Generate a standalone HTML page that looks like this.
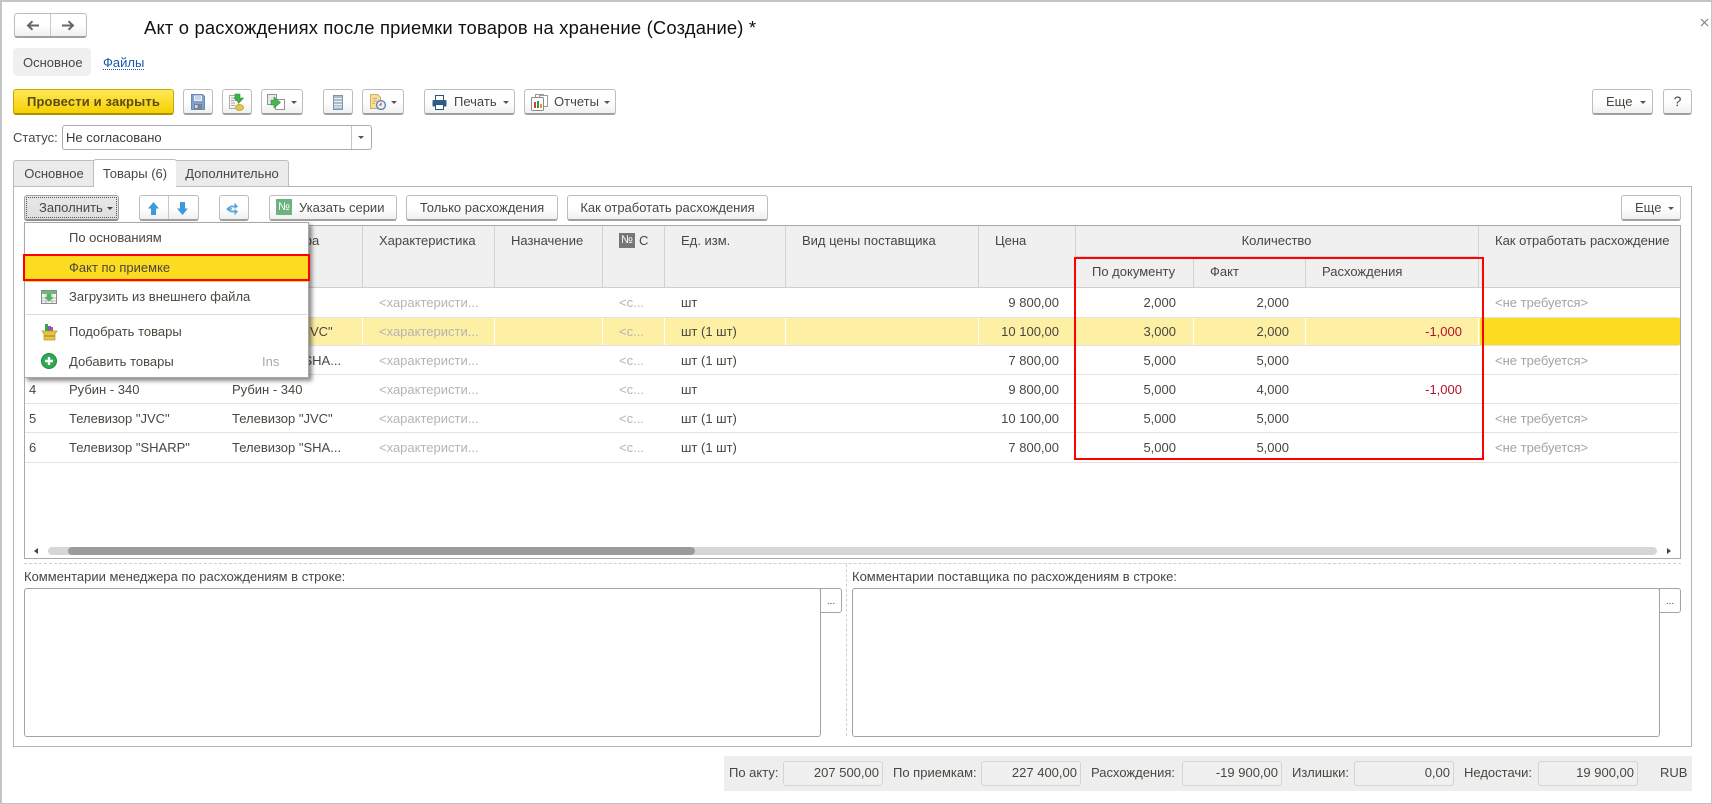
<!DOCTYPE html>
<html lang="ru"><head><meta charset="utf-8"><title>Акт о расхождениях</title>
<style>
html,body{margin:0;padding:0;background:#fff}
#p{position:relative;width:1712px;height:804px;overflow:hidden;background:#fff;font-family:"Liberation Sans",Arial,sans-serif;font-size:13px;color:#4a463f}
#p div,#p svg{position:absolute;box-sizing:border-box}
.t{white-space:nowrap;line-height:16px;height:16px}
.r{white-space:nowrap;line-height:16px;height:16px;text-align:right}
.g{color:#b4b4b4}
.g2{color:#a3a3a3}
.red{color:#b5122e}
.b{border:1px solid #bdbdbd;border-bottom:2px solid #a0a0a0;border-radius:3px;background:linear-gradient(#fff 0%,#fff 50%,#f0f0f0 100%);height:26px;line-height:23px;white-space:nowrap;text-align:center}
.tri{width:0;height:0;border-left:3px solid transparent;border-right:3px solid transparent;border-top:3.500px solid #555}
.rowl{left:25px;width:1654px;height:1px;background:#e2e2e2}
.f{background:#f0f0f0;border:1px solid #d4d4d4;border-radius:3px;height:25px;top:761px;line-height:22px;text-align:right;padding-right:3px;color:#4a463f}
.w{background:#fff;width:1px;top:318px;height:27px}
.hs{background:#d2d2d2;width:1px}
</style></head><body><div id="p">
<!-- window border -->
<div style="left:0;top:0;width:1712px;height:804px;border:2px solid #c4c4c4;border-right-width:1px;border-bottom-width:1px"></div>

<!-- nav -->
<div class="b" style="left:14px;top:13px;width:73px;height:25px"></div>
<div style="left:50px;top:14px;width:1px;height:22px;background:#c9c9c9"></div>
<svg style="left:26px;top:20px" width="14" height="11" viewBox="0 0 14 11"><path d="M13 5.500H3M6.500 1.200L2 5.500L6.500 9.800" fill="none" stroke="#666" stroke-width="2"/></svg>
<svg style="left:61px;top:20px" width="14" height="11" viewBox="0 0 14 11"><path d="M1 5.500H11M7.500 1.200L12 5.500L7.500 9.800" fill="none" stroke="#666" stroke-width="2"/></svg>
<div class="t" style="left:144px;top:17px;height:22px;line-height:22px;font-size:18.400px;color:#111;letter-spacing:.18px">Акт о расхождениях после приемки товаров на хранение (Создание) *</div>
<svg style="left:1700px;top:18px" width="9" height="9" viewBox="0 0 9 9"><path d="M1 1L8 8M8 1L1 8" stroke="#777" stroke-width="1"/></svg>

<!-- form tabs -->
<div style="left:13px;top:48px;width:78px;height:28px;background:#f0f0f0;border-radius:4px"></div>
<div class="t" style="left:23px;top:55px">Основное</div>
<div class="t" style="left:103px;top:55px;color:#1d56a8;border-bottom:1px dotted #1d56a8;height:15px">Файлы</div>

<!-- command bar -->
<div class="b" style="left:13px;top:89px;width:161px;background:linear-gradient(#ffe95a,#f6d000);border:1px solid #c6a900;border-bottom:2px solid #ad9200;color:#5b4c10;font-weight:bold;letter-spacing:.15px">Провести и закрыть</div>
<div class="b" style="left:183px;top:89px;width:30px"></div>
<svg style="left:191px;top:94px" width="14" height="16" viewBox="0 0 14 16"><path d="M.5 .5H11.500L13.500 2.500V15.500H.5Z" fill="#7ea2d0" stroke="#6688b5"/><rect x="3" y="1.500" width="8" height="5.500" fill="#eef3f9"/><path d="M4 3H10M4 5H10" stroke="#9db6d6"/><rect x="3" y="10" width="8" height="5" fill="#77808c"/><rect x="4" y="11" width="2.500" height="3" fill="#d6dadf"/></svg>
<div class="b" style="left:222px;top:89px;width:30px"></div>
<svg style="left:229px;top:93px" width="16" height="18" viewBox="0 0 16 18"><path d="M.5 2.500H9.500V15.500H.5Z" fill="#f7f7f3" stroke="#a8a8a8"/><path d="M2 5H7M2 7.500H7M2 10H6M2 12.500H6" stroke="#a9a9a9"/><path d="M6 1H11V5H14.500L10 10L5 5H6Z" fill="#3fb04a" stroke="#2b8f3c" stroke-width=".6"/><ellipse cx="10.500" cy="14.500" rx="4" ry="3" fill="#e9c744" stroke="#c09e33" stroke-width=".8"/></svg>
<div class="b" style="left:261px;top:89px;width:42px"></div>
<svg style="left:267px;top:94px" width="18" height="16" viewBox="0 0 18 16"><rect x=".5" y=".5" width="9" height="10" fill="#e9eced" stroke="#8f9499"/><rect x="8.500" y="5.500" width="9" height="10" fill="#fff" stroke="#8f9499"/><path d="M3 5H6V2L12.500 7.500L6 13V10H3Z" fill="#4ab550" stroke="#33923f" stroke-width=".6" transform="translate(1 1)"/></svg>
<div class="tri" style="left:291px;top:101px"></div>
<div class="b" style="left:323px;top:89px;width:30px"></div>
<svg style="left:333px;top:95px" width="10" height="15" viewBox="0 0 10 15"><rect x=".5" y=".5" width="9" height="14" fill="#a8bccf" stroke="#7d94a8"/><path d="M1 3.500H9M1 6.500H9M1 9.500H9M1 12H9" stroke="#eaf0f4"/></svg>
<div class="b" style="left:362px;top:89px;width:42px"></div>
<svg style="left:370px;top:94px" width="16" height="16" viewBox="0 0 16 16"><path d="M.5 .5H7.500L10.500 3.500V14.500H.5Z" fill="#f6dfa0" stroke="#cdae63"/><path d="M2.500 4.500H7M2.500 7H7M2.500 9.500H5" stroke="#cdae63"/><circle cx="11" cy="11" r="4.400" fill="#eef3f8" stroke="#5581b4" stroke-width="1.300"/><path d="M11 8.500V11H9" stroke="#c0392b" fill="none"/></svg>
<div class="tri" style="left:391px;top:101px"></div>

<div class="b" style="left:424px;top:89px;width:91px;text-align:left;padding-left:29px">Печать</div>
<svg style="left:432px;top:95px" width="15" height="15" viewBox="0 0 15 15"><rect x="3.500" y=".5" width="8" height="5" fill="#fff" stroke="#2e5578"/><rect x=".5" y="5" width="14" height="6.500" rx="1" fill="#2e5d85"/><rect x="3.500" y="9.500" width="8" height="5" fill="#fff" stroke="#2e5578"/></svg>
<div class="tri" style="left:503px;top:101px"></div>
<div class="b" style="left:524px;top:89px;width:92px;text-align:left;padding-left:29px">Отчеты</div>
<svg style="left:531px;top:94px" width="17" height="17" viewBox="0 0 17 17"><rect x="4.500" y=".5" width="8" height="11" fill="#fff" stroke="#9a9a9a"/><rect x="8.500" y="1.500" width="8" height="11" fill="#fff" stroke="#9a9a9a"/><rect x=".5" y="3.500" width="12" height="13" rx="1" fill="#fff" stroke="#8a8a8a"/><rect x="3" y="8" width="2" height="6" fill="#d83c3c"/><rect x="6" y="7" width="2" height="7" fill="#3a9a3a"/><rect x="9" y="10" width="2" height="4" fill="#d89a2a"/></svg>
<div class="tri" style="left:604px;top:101px"></div>
<div class="b" style="left:1592px;top:89px;width:61px;text-align:left;padding-left:13px">Еще</div>
<div class="tri" style="left:1640px;top:101px"></div>
<div class="b" style="left:1663px;top:89px;width:29px;font-size:14px">?</div>

<!-- status -->
<div class="t" style="left:13px;top:130px">Статус:</div>
<div style="left:62px;top:125px;width:310px;height:25px;border:1px solid #ababab;border-radius:3px;background:#fff"></div>
<div style="left:351px;top:126px;width:1px;height:23px;background:#c4c4c4"></div>
<div class="tri" style="left:358px;top:136px"></div>
<div class="t" style="left:66px;top:130px;color:#3c3a35">Не согласовано</div>

<!-- tabs and panel -->
<div style="left:13px;top:186px;width:1679px;height:561px;border:1px solid #b4b4b4;background:#fff"></div>
<div style="left:13px;top:160px;width:81px;height:27px;background:#ebebeb;border:1px solid #bdbdbd;border-right:0;border-radius:3px 0 0 0;text-align:center;line-height:25px">Основное</div>
<div style="left:93px;top:159px;width:84px;height:28px;background:#fff;border:1px solid #bdbdbd;border-bottom:0;border-radius:3px 3px 0 0;text-align:center;line-height:27px">Товары (6)</div>
<div style="left:176px;top:160px;width:113px;height:27px;background:#ebebeb;border:1px solid #bdbdbd;border-left:0;border-radius:0 3px 0 0;text-align:center;line-height:25px">Дополнительно</div>

<!-- table toolbar -->
<div class="b" style="left:24px;top:195px;width:95px;background:linear-gradient(#e8e8e8,#dedede);border-color:#a2a2a2;border-bottom-color:#8f8f8f;text-align:left;padding-left:14px">Заполнить</div>
<div style="left:26px;top:197px;width:91px;height:21px;border:1px dotted #555"></div>
<div class="tri" style="left:107px;top:207px;border-top-color:#444"></div>
<div class="b" style="left:139px;top:195px;width:60px"></div>
<div style="left:168px;top:196px;width:1px;height:23px;background:#c8c8c8"></div>
<svg style="left:148px;top:202px" width="11" height="13" viewBox="0 0 11 13"><path d="M5.500 0L11 6.500H8V13H3V6.500H0Z" fill="#3d9ad9"/></svg>
<svg style="left:177px;top:202px" width="11" height="13" viewBox="0 0 11 13"><path d="M5.500 13L11 6.500H8V0H3V6.500H0Z" fill="#3d9ad9"/></svg>
<div class="b" style="left:219px;top:195px;width:30px"></div>
<svg style="left:226px;top:202px" width="15" height="14" viewBox="0 0 15 14"><path d="M1 7L5 4.500H9M1 7L5 9.500H9" fill="none" stroke="#5aa7dc" stroke-width="1.800"/><path d="M8.500 .5L12 4.500L8.500 7ZM8.500 7L12 9.500L8.500 13.500Z" fill="#5aa7dc"/><path d="M1 7H6" stroke="#5aa7dc" stroke-width="1.500"/></svg>
<div class="b" style="left:269px;top:195px;width:128px;text-align:left;padding-left:29px">Указать серии</div>
<div class="t" style="left:276px;top:199px;width:16px;height:16px;background:#6cb381;color:#fff;font-size:11px;text-align:center;line-height:16px">№</div>
<div class="b" style="left:406px;top:195px;width:152px">Только расхождения</div>
<div class="b" style="left:567px;top:195px;width:201px">Как отработать расхождения</div>
<div class="b" style="left:1621px;top:195px;width:60px;text-align:left;padding-left:13px">Еще</div>
<div class="tri" style="left:1668px;top:207px"></div>

<!-- table -->
<div style="left:24px;top:225px;width:1657px;height:334px;border:1px solid #a9a9a9;background:#fff"></div>
<div style="left:25px;top:226px;width:1655px;height:62px;background:#f0f0f0;border-bottom:1px solid #cfcfcf"></div>
<div class="hs" style="left:362px;top:226px;height:61px"></div>
<div class="hs" style="left:494px;top:226px;height:61px"></div>
<div class="hs" style="left:602px;top:226px;height:61px"></div>
<div class="hs" style="left:664px;top:226px;height:61px"></div>
<div class="hs" style="left:785px;top:226px;height:61px"></div>
<div class="hs" style="left:978px;top:226px;height:61px"></div>
<div class="hs" style="left:1075px;top:226px;height:61px"></div>
<div class="hs" style="left:1478px;top:226px;height:61px"></div>
<div style="left:1075px;top:256px;width:403px;height:1px;background:#d2d2d2"></div>
<div class="hs" style="left:1193px;top:257px;height:30px"></div>
<div class="hs" style="left:1305px;top:257px;height:30px"></div>

<div class="t" style="left:232px;top:233px">Номенклатура</div>
<div class="t" style="left:379px;top:233px">Характеристика</div>
<div class="t" style="left:511px;top:233px">Назначение</div>
<div class="t" style="left:619px;top:233px;width:16px;height:15px;background:#777;color:#fff;font-size:11px;line-height:15px;text-align:center">№</div>
<div class="t" style="left:639px;top:233px">С</div>
<div class="t" style="left:681px;top:233px">Ед. изм.</div>
<div class="t" style="left:802px;top:233px">Вид цены поставщика</div>
<div class="t" style="left:995px;top:233px">Цена</div>
<div class="t" style="left:1075px;top:233px;width:403px;text-align:center">Количество</div>
<div class="t" style="left:1495px;top:233px">Как отработать расхождение</div>
<div class="t" style="left:1092px;top:264px">По документу</div>
<div class="t" style="left:1210px;top:264px">Факт</div>
<div class="t" style="left:1322px;top:264px">Расхождения</div>

<!-- selected row -->
<div style="left:25px;top:318px;width:1655px;height:27px;background:#fdf0a4"></div>
<div style="left:1480px;top:318px;width:200px;height:27px;background:#fcdc21"></div>
<div class="w" style="left:362px"></div><div class="w" style="left:494px"></div><div class="w" style="left:602px"></div><div class="w" style="left:664px"></div><div class="w" style="left:785px"></div><div class="w" style="left:978px"></div><div class="w" style="left:1075px"></div><div class="w" style="left:1193px"></div><div class="w" style="left:1305px"></div><div class="w" style="left:1478px"></div>

<div class="rowl" style="top:317px"></div><div class="rowl" style="top:345px"></div><div class="rowl" style="top:374px"></div><div class="rowl" style="top:403px"></div><div class="rowl" style="top:432px"></div><div class="rowl" style="top:462px"></div>

<!-- rows -->
<div class="t" style="left:29px;top:382px">4</div><div class="t" style="left:69px;top:382px">Рубин - 340</div><div class="t" style="left:232px;top:382px">Рубин - 340</div>
<div class="t" style="left:29px;top:411px">5</div><div class="t" style="left:69px;top:411px">Телевизор "JVC"</div><div class="t" style="left:232px;top:411px">Телевизор "JVC"</div>
<div class="t" style="left:29px;top:440px">6</div><div class="t" style="left:69px;top:440px">Телевизор "SHARP"</div><div class="t" style="left:232px;top:440px">Телевизор "SHA...</div>
<div class="t" style="left:232px;top:324px">Телевизор "JVC"</div>
<div class="t" style="left:232px;top:353px">Телевизор "SHA...</div>

<div class="t g" style="left:379px;top:295px">&lt;характеристи...</div>
<div class="t g" style="left:379px;top:324px">&lt;характеристи...</div>
<div class="t g" style="left:379px;top:353px">&lt;характеристи...</div>
<div class="t g" style="left:379px;top:382px">&lt;характеристи...</div>
<div class="t g" style="left:379px;top:411px">&lt;характеристи...</div>
<div class="t g" style="left:379px;top:440px">&lt;характеристи...</div>

<div class="t g" style="left:619px;top:295px">&lt;с...</div>
<div class="t g" style="left:619px;top:324px">&lt;с...</div>
<div class="t g" style="left:619px;top:353px">&lt;с...</div>
<div class="t g" style="left:619px;top:382px">&lt;с...</div>
<div class="t g" style="left:619px;top:411px">&lt;с...</div>
<div class="t g" style="left:619px;top:440px">&lt;с...</div>

<div class="t" style="left:681px;top:295px">шт</div>
<div class="t" style="left:681px;top:324px">шт (1 шт)</div>
<div class="t" style="left:681px;top:353px">шт (1 шт)</div>
<div class="t" style="left:681px;top:382px">шт</div>
<div class="t" style="left:681px;top:411px">шт (1 шт)</div>
<div class="t" style="left:681px;top:440px">шт (1 шт)</div>

<div class="r" style="left:958px;width:101px;top:295px">9 800,00</div>
<div class="r" style="left:958px;width:101px;top:324px">10 100,00</div>
<div class="r" style="left:958px;width:101px;top:353px">7 800,00</div>
<div class="r" style="left:958px;width:101px;top:382px">9 800,00</div>
<div class="r" style="left:958px;width:101px;top:411px">10 100,00</div>
<div class="r" style="left:958px;width:101px;top:440px">7 800,00</div>

<div class="r" style="left:1100px;width:76px;top:295px">2,000</div>
<div class="r" style="left:1100px;width:76px;top:324px">3,000</div>
<div class="r" style="left:1100px;width:76px;top:353px">5,000</div>
<div class="r" style="left:1100px;width:76px;top:382px">5,000</div>
<div class="r" style="left:1100px;width:76px;top:411px">5,000</div>
<div class="r" style="left:1100px;width:76px;top:440px">5,000</div>

<div class="r" style="left:1213px;width:76px;top:295px">2,000</div>
<div class="r" style="left:1213px;width:76px;top:324px">2,000</div>
<div class="r" style="left:1213px;width:76px;top:353px">5,000</div>
<div class="r" style="left:1213px;width:76px;top:382px">4,000</div>
<div class="r" style="left:1213px;width:76px;top:411px">5,000</div>
<div class="r" style="left:1213px;width:76px;top:440px">5,000</div>

<div class="r red" style="left:1386px;width:76px;top:324px">-1,000</div>
<div class="r red" style="left:1386px;width:76px;top:382px">-1,000</div>

<div class="t g2" style="left:1495px;top:295px">&lt;не требуется&gt;</div>
<div class="t g2" style="left:1495px;top:353px">&lt;не требуется&gt;</div>
<div class="t g2" style="left:1495px;top:411px">&lt;не требуется&gt;</div>
<div class="t g2" style="left:1495px;top:440px">&lt;не требуется&gt;</div>

<!-- red highlight -->
<div style="left:1074px;top:257px;width:410px;height:203px;border:2px solid #f00"></div>

<!-- scrollbar -->
<div style="left:48px;top:547px;width:1609px;height:8px;background:#d6d6d6;border-radius:4px"></div>
<div style="left:68px;top:547px;width:627px;height:8px;background:#9b9b9b;border-radius:4px"></div>
<div style="left:34px;top:548px;width:0;height:0;border-top:3px solid transparent;border-bottom:3px solid transparent;border-right:4px solid #444"></div>
<div style="left:1667px;top:548px;width:0;height:0;border-top:3px solid transparent;border-bottom:3px solid transparent;border-left:4px solid #444"></div>

<!-- comments -->
<div style="left:24px;top:563px;width:1657px;height:0;border-top:1px dashed #cfcfcf"></div>
<div style="left:846px;top:564px;width:0;height:172px;border-left:1px dashed #cfcfcf"></div>
<div class="t" style="left:24px;top:569px">Комментарии менеджера по расхождениям в строке:</div>
<div class="t" style="left:852px;top:569px">Комментарии поставщика по расхождениям в строке:</div>
<div style="left:24px;top:588px;width:797px;height:149px;border:1px solid #a3a3a3;border-radius:3px;background:#fff"></div>
<div style="left:820px;top:588px;width:22px;height:25px;border:1px solid #a3a3a3;border-radius:0 3px 3px 0;background:#fff;font-size:10px;text-align:center;line-height:26px">...</div>
<div style="left:852px;top:588px;width:808px;height:149px;border:1px solid #a3a3a3;border-radius:3px;background:#fff"></div>
<div style="left:1659px;top:588px;width:22px;height:25px;border:1px solid #a3a3a3;border-radius:0 3px 3px 0;background:#fff;font-size:10px;text-align:center;line-height:26px">...</div>

<!-- totals -->
<div style="left:724px;top:756px;width:968px;height:35px;background:#eee"></div>
<div class="t" style="left:729px;top:765px">По акту:</div>
<div class="f" style="left:783px;width:100px">207 500,00</div>
<div class="t" style="left:893px;top:765px">По приемкам:</div>
<div class="f" style="left:981px;width:100px">227 400,00</div>
<div class="t" style="left:1091px;top:765px">Расхождения:</div>
<div class="f" style="left:1182px;width:100px">-19 900,00</div>
<div class="t" style="left:1292px;top:765px">Излишки:</div>
<div class="f" style="left:1354px;width:100px">0,00</div>
<div class="t" style="left:1464px;top:765px">Недостачи:</div>
<div class="f" style="left:1538px;width:100px">19 900,00</div>
<div class="t" style="left:1660px;top:765px">RUB</div>

<!-- dropdown menu -->
<div style="left:24px;top:222px;width:285px;height:156px;background:#fff;border:1px solid #a8a8a8;box-shadow:3px 3px 4px rgba(0,0,0,.45)"></div>
<div style="left:25px;top:254px;width:283px;height:28px;background:#fcdc21"></div>
<div style="left:23px;top:254px;width:287px;height:27px;border:2px solid #f00"></div>
<div style="left:26px;top:314px;width:281px;height:1px;background:#dcd9c8"></div>
<div class="t" style="left:69px;top:230px">По основаниям</div>
<div class="t" style="left:69px;top:260px">Факт по приемке</div>
<div class="t" style="left:69px;top:289px">Загрузить из внешнего файла</div>
<div class="t" style="left:69px;top:324px">Подобрать товары</div>
<div class="t" style="left:69px;top:354px">Добавить товары</div>
<div class="t" style="left:262px;top:354px;color:#a9a9a9">Ins</div>
<svg style="left:41px;top:290px" width="16" height="14" viewBox="0 0 16 14"><rect x=".5" y=".5" width="15" height="13" fill="#f4f4f4" stroke="#8b8b8b"/><rect x="1" y="1" width="14" height="3" fill="#6dbb7a"/><path d="M1 8H15M1 11H15M5 4V13M11 4V13" stroke="#bbb"/><path d="M6 4H10V7H12.500L8 11.500L3.500 7H6Z" fill="#4db560"/></svg>
<svg style="left:41px;top:323px" width="17" height="18" viewBox="0 0 17 18"><rect x="4" y="1" width="3" height="8" fill="#3aa64a"/><rect x="7" y="3" width="3" height="6" fill="#7a5fc0"/><rect x="10" y="4" width="2" height="5" fill="#d04a6a"/><path d="M1 8H16L14 11V17H3V11Z" fill="#e6c544" stroke="#b5962a" stroke-width=".7"/><rect x="3" y="12" width="11" height="2" fill="#c7a42c"/></svg>
<svg style="left:41px;top:353px" width="16" height="16" viewBox="0 0 16 16"><circle cx="8" cy="8" r="7.500" fill="#2fa84f" stroke="#1f8a3d"/><path d="M8 4V12M4 8H12" stroke="#fff" stroke-width="2.400"/></svg>
</div></body></html>
